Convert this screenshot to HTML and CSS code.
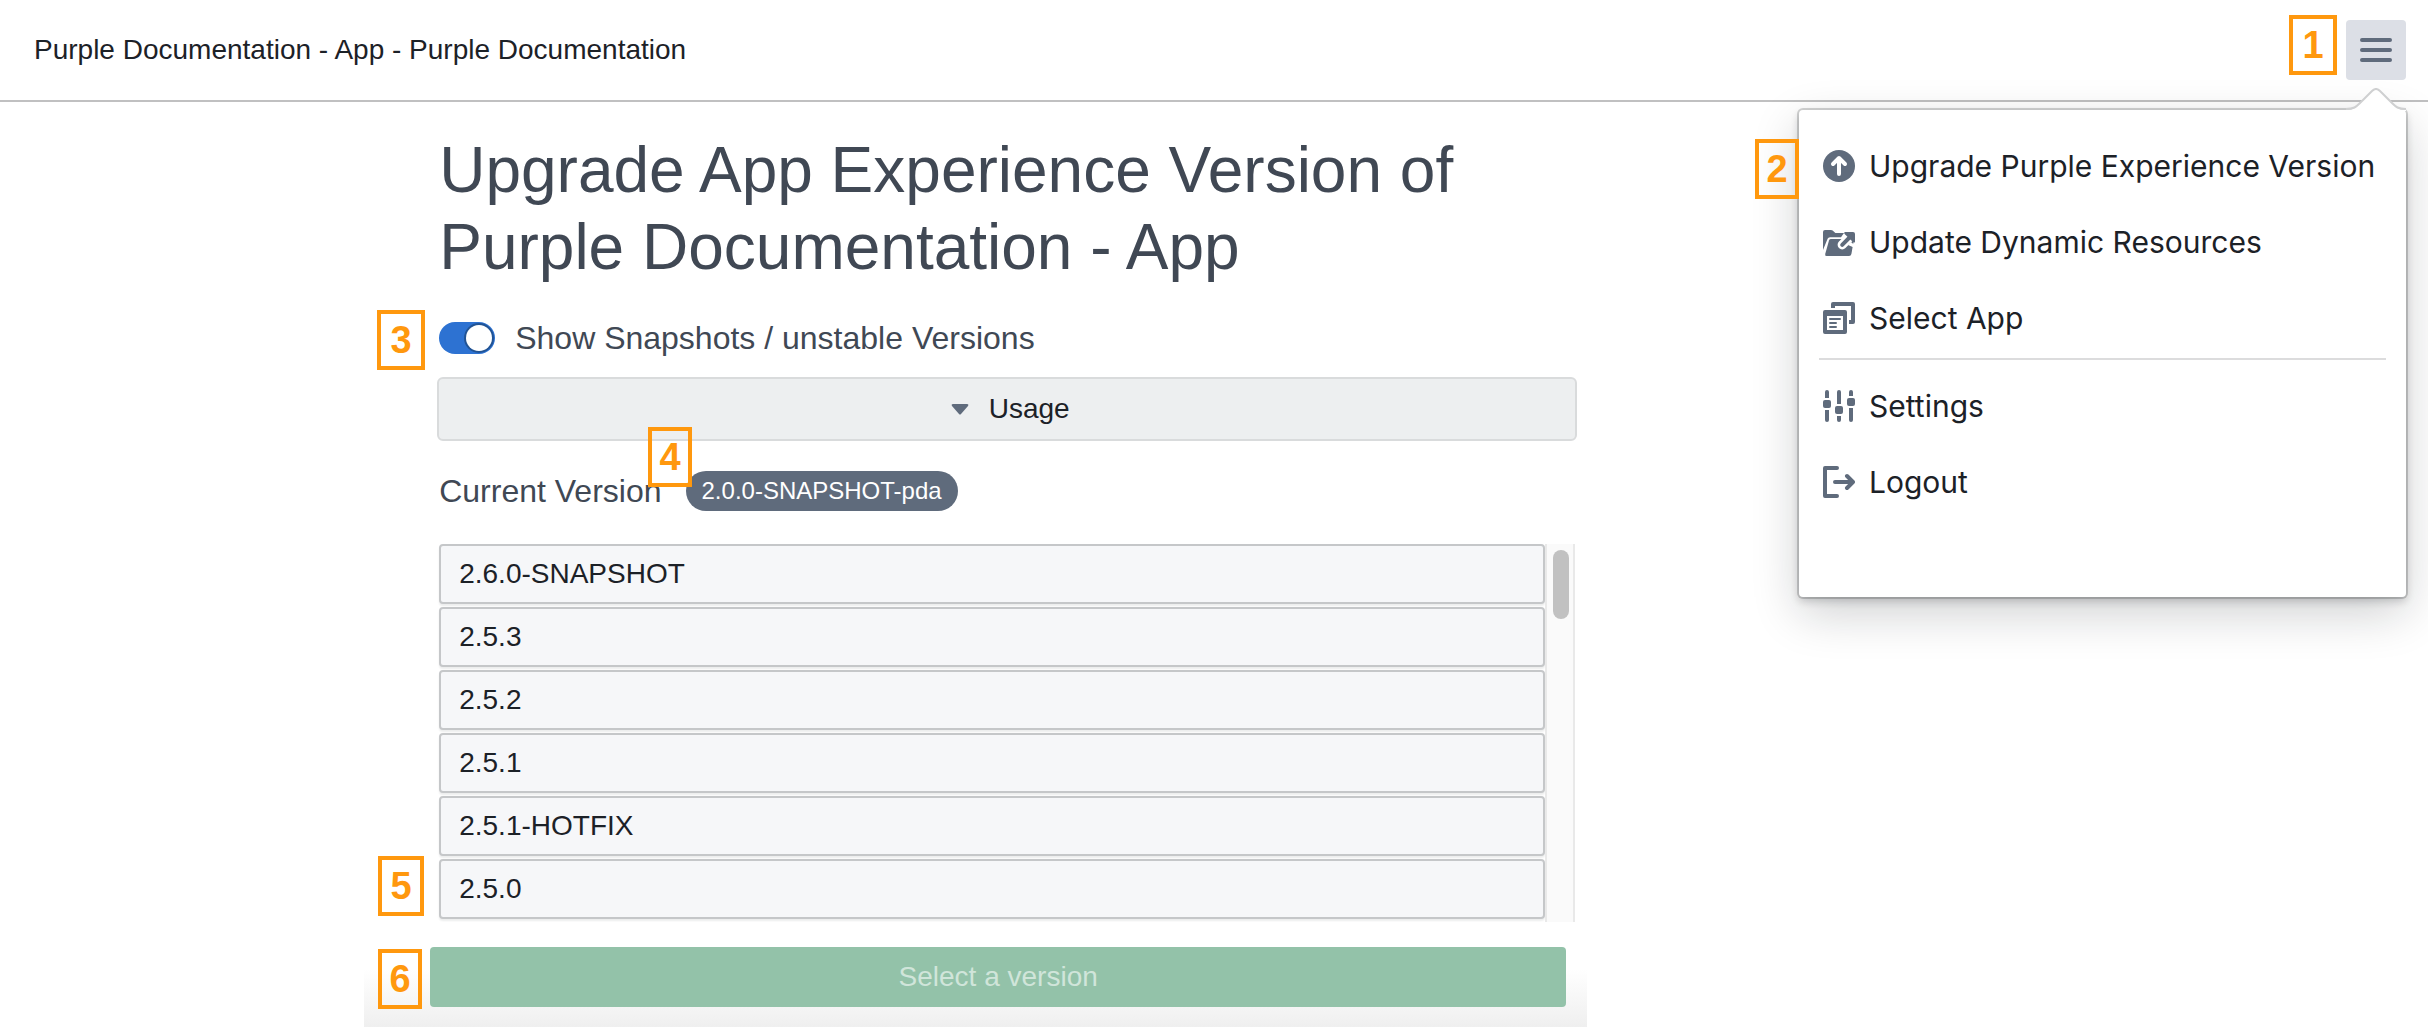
FILE: index.html
```html
<!DOCTYPE html>
<html lang="en">
<head>
    <meta charset="UTF-8">
    <meta name="viewport" content="width=device-width, initial-scale=1.0">
    <title>Purple Documentation - App</title>
    <link rel="stylesheet" href="styles.css">
</head>
<body>
<header class="topbar">
    <span class="topbar-title">Purple Documentation - App - Purple Documentation</span>
    <div class="topbar-menu">
        <button type="button" class="menu-button" aria-label="Menu">
            <svg viewBox="0 0 16 16" width="32" height="32"><path d="M1 3h14M1 8h14M1 13h14" fill="none" stroke="#5f6b7c" stroke-width="2" stroke-linecap="round"/></svg>
        </button>
        <span class="marker marker-1">1</span>
        <nav class="popover">
            <svg class="popover-arrow" viewBox="0 0 60 23" width="60" height="23">
                <path d="M0 22C8 22 10 19 14 15L26 3Q30 -1 34 3L46 15C50 19 52 22 60 22V23H0Z" fill="#fff"/>
                <path d="M0 21C8 21 10 19 14 15L26 3Q30 -1 34 3L46 15C50 19 52 21 60 21" fill="none" stroke="#cfd0d1" stroke-width="2"/>
            </svg>
            <ul class="menu">
                <li><a href="#upgrade" class="menu-item">
                    <svg viewBox="0 0 16 16" width="32" height="32"><circle cx="8" cy="8" r="8" fill="#5f6b7c"/><path d="M8 12V4.500M5 7l3-3 3 3" fill="none" stroke="#fff" stroke-width="2" stroke-linecap="round" stroke-linejoin="round"/></svg>
                    Upgrade Purple Experience Version</a></li>
                <li><a href="#resources" class="menu-item">
                    <svg viewBox="0 0 16 16" width="32" height="32">
                        <path d="M0 12V3Q0 2 1 2h3q.5 0 .8.3L6.200 3.500H10.500L9 5.600H3.500Q2.600 5.600 2.300 6.400Z" fill="#5f6b7c"/>
                        <path d="M1.100 14L3 7.200Q3.200 6.500 4 6.500H15.500L14.200 14Q14 15 13 15H1.800Q.9 15 1.100 14Z" fill="#5f6b7c"/>
                        <path d="M9.600 9.400L14 5" fill="none" stroke="#fff" stroke-width="4.600" stroke-linecap="round"/>
                        <path d="M12.500 9.500L14 8L16 9.800V11Z" fill="#fff"/>
                        <path d="M9.600 9.400L14 5" fill="none" stroke="#5f6b7c" stroke-width="2" stroke-linecap="round"/>
                        <path d="M11 3h4q1 0 1 1v4q-.4.500-1 0L10.800 4Q10.200 3.300 11 3z" fill="#5f6b7c"/>
                    </svg>
                    Update Dynamic Resources</a></li>
                <li><a href="#apps" class="menu-item">
                    <svg viewBox="0 0 16 16" width="32" height="32"><path d="M4 3V1q0-1 1-1h10q1 0 1 1v9q0 1-1 1h-2V9h1V2H6v1z" fill="#5f6b7c"/><path fill-rule="evenodd" d="M1 4h10q1 0 1 1v10q0 1-1 1H1q-1 0-1-1V5q0-1 1-1zM2 7v7h8V7z" fill="#5f6b7c"/><path d="M3.500 8.500h5M3.500 10.500h3M3.500 12.500h3" stroke="#5f6b7c" stroke-linecap="round"/></svg>
                    Select App</a></li>
                <li class="menu-divider"></li>
                <li><a href="#settings" class="menu-item">
                    <svg viewBox="0 0 16 16" width="32" height="32"><g fill="#5f6b7c"><path d="M1 4V1q0-1 1-1t1 1v3zM1 10h2v5q0 1-1 1t-1-1zM7 7V1q0-1 1-1t1 1v6zM7 13h2v2q0 1-1 1t-1-1zM13 3V1q0-1 1-1t1 1v2zM13 9h2v6q0 1-1 1t-1-1z"/><rect x="0" y="5" width="4" height="4" rx="1"/><rect x="6" y="8" width="4" height="4" rx="1"/><rect x="12" y="4" width="4" height="4" rx="1"/></g></svg>
                    Settings</a></li>
                <li><a href="#logout" class="menu-item">
                    <svg viewBox="0 0 16 16" width="32" height="32"><path d="M7 1H1v14h6M6 8h8.500M12 5l3 3-3 3" fill="none" stroke="#5f6b7c" stroke-width="2" stroke-linecap="round" stroke-linejoin="round"/></svg>
                    Logout</a></li>
            </ul>
            <span class="marker marker-2">2</span>
        </nav>
    </div>
</header>
<main class="content">
    <h1>Upgrade App Experience Version of Purple Documentation - App</h1>
    <div class="switch-row">
        <input type="checkbox" id="snapshots" class="switch" checked>
        <label for="snapshots">Show Snapshots / unstable Versions</label>
        <span class="marker marker-3">3</span>
    </div>
    <button type="button" class="usage">
        <svg viewBox="0 0 18 11" width="18" height="11"><path d="M2 0h14q2 0 1 2l-7 8q-1 1-2 0L1 2Q0 0 2 0z" fill="#5f6b7c"/></svg>
        Usage
    </button>
    <div class="current">
        Current Version <span class="tag">2.0.0-SNAPSHOT-pda</span>
        <span class="marker marker-4">4</span>
    </div>
    <div class="versions">
        <div class="version-list">
            <button type="button" class="version">2.6.0-SNAPSHOT</button>
            <button type="button" class="version">2.5.3</button>
            <button type="button" class="version">2.5.2</button>
            <button type="button" class="version">2.5.1</button>
            <button type="button" class="version">2.5.1-HOTFIX</button>
            <button type="button" class="version">2.5.0</button>
        </div>
        <div class="scrollbar"><div class="thumb"></div></div>
        <span class="marker marker-5">5</span>
    </div>
    <div class="actions">
        <button type="button" class="select-version" disabled>Select a version</button>
        <span class="marker marker-6">6</span>
    </div>
</main>
</body>
</html>
```
FILE: styles.css
```css
* {
    box-sizing: border-box;
}
html, body {
    height: 100%;
}
body {
    margin: 0;
    display: flex;
    flex-direction: column;
    background: #fff;
    color: #1c2127;
    font-family: "Liberation Sans", Arial, sans-serif;
    font-size: 28px;
    overflow: hidden;
}
button {
    font: inherit;
    color: inherit;
    cursor: pointer;
}
svg {
    display: block;
    flex: none;
}

/* top bar */
.topbar {
    display: flex;
    align-items: center;
    justify-content: space-between;
    padding: 20px 22px 20px 34px;
    border-bottom: 2px solid #c0c0c1;
}
.topbar-menu {
    position: relative;
}
.menu-button {
    display: flex;
    align-items: center;
    justify-content: center;
    width: 60px;
    height: 60px;
    padding: 0;
    border: 0;
    border-radius: 4px;
    background: #dcdfe6;
}

/* popover menu */
.popover {
    position: absolute;
    top: 90px;
    right: 0;
    width: 607px;
    padding: 18px 20px 77px;
    border-radius: 4px;
    background: #fff;
    box-shadow: 0 0 0 2px rgba(17, 20, 24, 0.18), 0 4px 8px rgba(17, 20, 24, 0.2), 0 16px 48px rgba(17, 20, 24, 0.2);
    font-family: Inter, sans-serif;
    font-size: 30px;
}
.popover-arrow {
    position: absolute;
    top: -22px;
    right: 0;
}
.menu {
    margin: 0;
    padding: 0;
    list-style: none;
}
.menu-item {
    display: flex;
    align-items: center;
    gap: 14px;
    height: 76px;
    padding-left: 4px;
    color: #1c2127;
    text-decoration: none;
    white-space: nowrap;
}
.menu-divider {
    margin: 2px 0 8px;
    border-top: 2px solid #dcdcdd;
}

/* content column */
.content {
    flex: 1;
    display: flex;
    flex-direction: column;
    width: 1223px;
    max-width: 100%;
    margin-left: 15%;
    padding: 30px 12px 0 75px;
    color: #404854;
}
h1 {
    margin: 0;
    font-size: 64px;
    font-weight: normal;
    line-height: 77px;
}
.switch-row {
    position: relative;
    display: flex;
    align-items: center;
    gap: 20px;
    margin-top: 32px;
    font-size: 32px;
    line-height: 40px;
}
.switch {
    appearance: none;
    width: 56px;
    height: 32px;
    margin: 0;
    padding: 1px;
    border-radius: 16px;
    background: #2d72d2;
}
.switch::before {
    content: "";
    display: block;
    width: 26px;
    height: 26px;
    margin: 2px 2px 0 auto;
    border-radius: 50%;
    background: #fff;
    box-shadow: 0 0 0 2px #215394;
}
.usage {
    display: flex;
    align-items: center;
    justify-content: center;
    gap: 20px;
    height: 64px;
    margin: 19px -2px 0;
    padding-left: 12px;
    border: 2px solid #d9dbdc;
    border-radius: 6px;
    background: #edeff0;
    color: #1c2127;
}
.current {
    position: relative;
    display: flex;
    align-items: center;
    gap: 24px;
    margin-top: 30px;
    font-size: 32px;
}
.tag {
    padding: 0 16px;
    border-radius: 20px;
    background: #5f6b7c;
    color: #fff;
    font-size: 24px;
    line-height: 40px;
}
.versions {
    position: relative;
    display: flex;
    height: 378px;
    margin-top: 33px;
}
.version-list {
    flex: 1;
    display: flex;
    flex-direction: column;
    gap: 3px;
}
.version {
    height: 60px;
    padding: 0 18px;
    border: 2px solid #c5c7c9;
    border-radius: 4px;
    background: #f6f7f9;
    box-shadow: 0 2px 2px rgba(17, 20, 24, 0.08);
    color: #1c2127;
    text-align: left;
}
.scrollbar {
    width: 30px;
    padding: 6px;
    border: solid #e9e9e9;
    border-width: 0 2px;
    background: #fafafa;
}
.thumb {
    width: 16px;
    height: 69px;
    border-radius: 8px;
    background: #c1c1c1;
}
.actions {
    position: relative;
    flex: 1;
    margin: 0 -12px 0 -75px;
    padding: 25px 21px 0 66px;
    background: linear-gradient(#fff 45%, #efefef);
}
.select-version {
    display: block;
    width: 100%;
    height: 60px;
    border: 0;
    border-radius: 4px;
    background: #93c2a9;
    color: #d0e5da;
}

/* numbered markers */
.marker {
    position: absolute;
    display: flex;
    align-items: center;
    justify-content: center;
    width: 44px;
    height: 60px;
    border: 4px solid #ff980e;
    color: #ff980e;
    font-family: "Liberation Sans", Arial, sans-serif;
    font-size: 38px;
    font-weight: bold;
}
.marker-1 {
    top: -5px;
    right: 69px;
    width: 48px;
}
.marker-2 {
    top: 29px;
    right: 100%;
}
.marker-3 {
    top: -8px;
    left: -62px;
    width: 48px;
}
.marker-4 {
    top: -44px;
    left: 209px;
}
.marker-5 {
    bottom: 6px;
    left: -61px;
    width: 46px;
}
.marker-6 {
    top: 27px;
    left: 14px;
}
```
